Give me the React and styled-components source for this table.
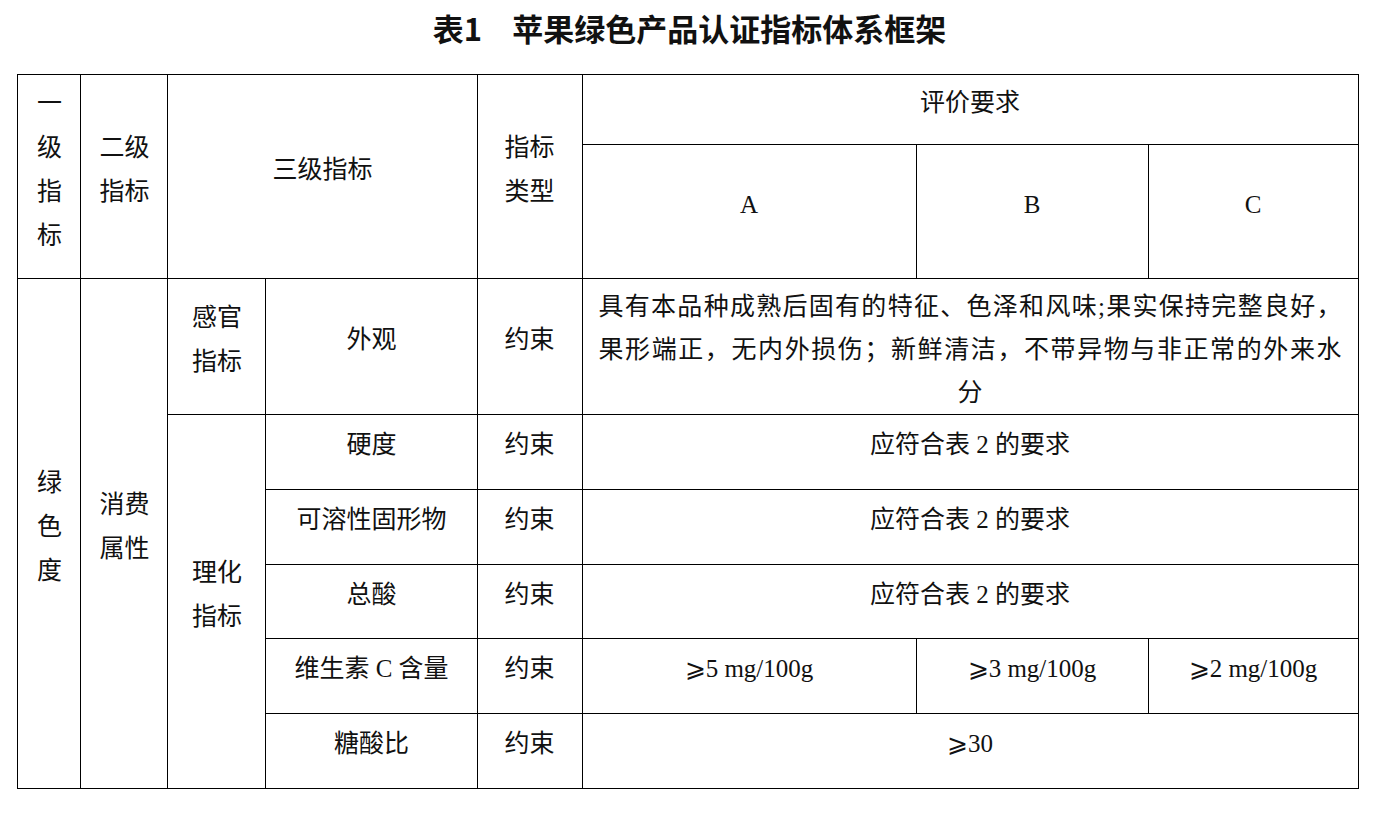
import React from 'react'
import styled, { createGlobalStyle } from 'styled-components'

const GlobalStyle = createGlobalStyle`
  html, body {
    margin: 0;
    padding: 0;
    background: #fff;
  }
  body {
    font-family: "Liberation Serif", "Noto Sans CJK SC", serif;
    color: #111;
  }
`

const Page = styled.div`
  width: 1379px;
  display: flex;
  flex-direction: column;
  align-items: center;
`

const Title = styled.h1`
  margin: 10px 0 28px;
  height: 36px;
  line-height: 36px;
  font-family: "Noto Sans CJK SC", sans-serif;
  font-weight: 700;
  font-size: 31px;
  color: #111;
  display: flex;
  gap: 30px;
`

const Grid = styled.table`
  width: 1340px;
  table-layout: fixed;
  border-collapse: collapse;
  margin-left: -3px;
`

const Row = styled.tr`
  height: ${p => p.$h}px;
`

const Cell = styled.td`
  border: 1.5px solid #000;
  padding: ${p => (p.$tight ? '6px 16px 0' : '0 6px 14px')};
  text-align: center;
  vertical-align: middle;
  font-size: 25px;
  line-height: 44px;
  white-space: nowrap;
`

const Line = styled.span`
  display: block;
  line-height: 43px;
  text-align: ${p => (p.$justify ? 'justify' : 'center')};
  text-align-last: ${p => (p.$justify ? 'justify' : 'center')};
`

const widths = [63, 87, 98, 211, 105, 334, 232, 210]

const Same = () => <Cell colSpan={3}>应符合表 2 的要求</Cell>

export default function App() {
  return (
    <>
      <GlobalStyle />
      <Page>
        <Title>
          <span>表1</span>
          <span>苹果绿色产品认证指标体系框架</span>
        </Title>
        <Grid>
          <colgroup>
            {widths.map((w, i) => (
              <col key={i} style={{ width: w }} />
            ))}
          </colgroup>
          <tbody>
            <Row $h={70}>
              <Cell rowSpan={2}>一<br />级<br />指<br />标</Cell>
              <Cell rowSpan={2}>二级<br />指标</Cell>
              <Cell rowSpan={2} colSpan={2}>三级指标</Cell>
              <Cell rowSpan={2}>指标<br />类型</Cell>
              <Cell colSpan={3}>评价要求</Cell>
            </Row>
            <Row $h={134}>
              <Cell>A</Cell>
              <Cell>B</Cell>
              <Cell>C</Cell>
            </Row>
            <Row $h={135}>
              <Cell rowSpan={6}>绿<br />色<br />度</Cell>
              <Cell rowSpan={6}>消费<br />属性</Cell>
              <Cell>感官<br />指标</Cell>
              <Cell>外观</Cell>
              <Cell>约束</Cell>
              <Cell colSpan={3} $tight>
                <Line $justify>具有本品种成熟后固有的特征、色泽和风味;果实保持完整良好，</Line>
                <Line $justify>果形端正，无内外损伤；新鲜清洁，不带异物与非正常的外来水</Line>
                <Line>分</Line>
              </Cell>
            </Row>
            <Row $h={75}>
              <Cell rowSpan={5}>理化<br />指标</Cell>
              <Cell>硬度</Cell>
              <Cell>约束</Cell>
              <Same />
            </Row>
            <Row $h={75}>
              <Cell>可溶性固形物</Cell>
              <Cell>约束</Cell>
              <Same />
            </Row>
            <Row $h={74}>
              <Cell>总酸</Cell>
              <Cell>约束</Cell>
              <Same />
            </Row>
            <Row $h={75}>
              <Cell>维生素 C 含量</Cell>
              <Cell>约束</Cell>
              <Cell>⩾5 mg/100g</Cell>
              <Cell>⩾3 mg/100g</Cell>
              <Cell>⩾2 mg/100g</Cell>
            </Row>
            <Row $h={75}>
              <Cell>糖酸比</Cell>
              <Cell>约束</Cell>
              <Cell colSpan={3}>⩾30</Cell>
            </Row>
          </tbody>
        </Grid>
      </Page>
    </>
  )
}
